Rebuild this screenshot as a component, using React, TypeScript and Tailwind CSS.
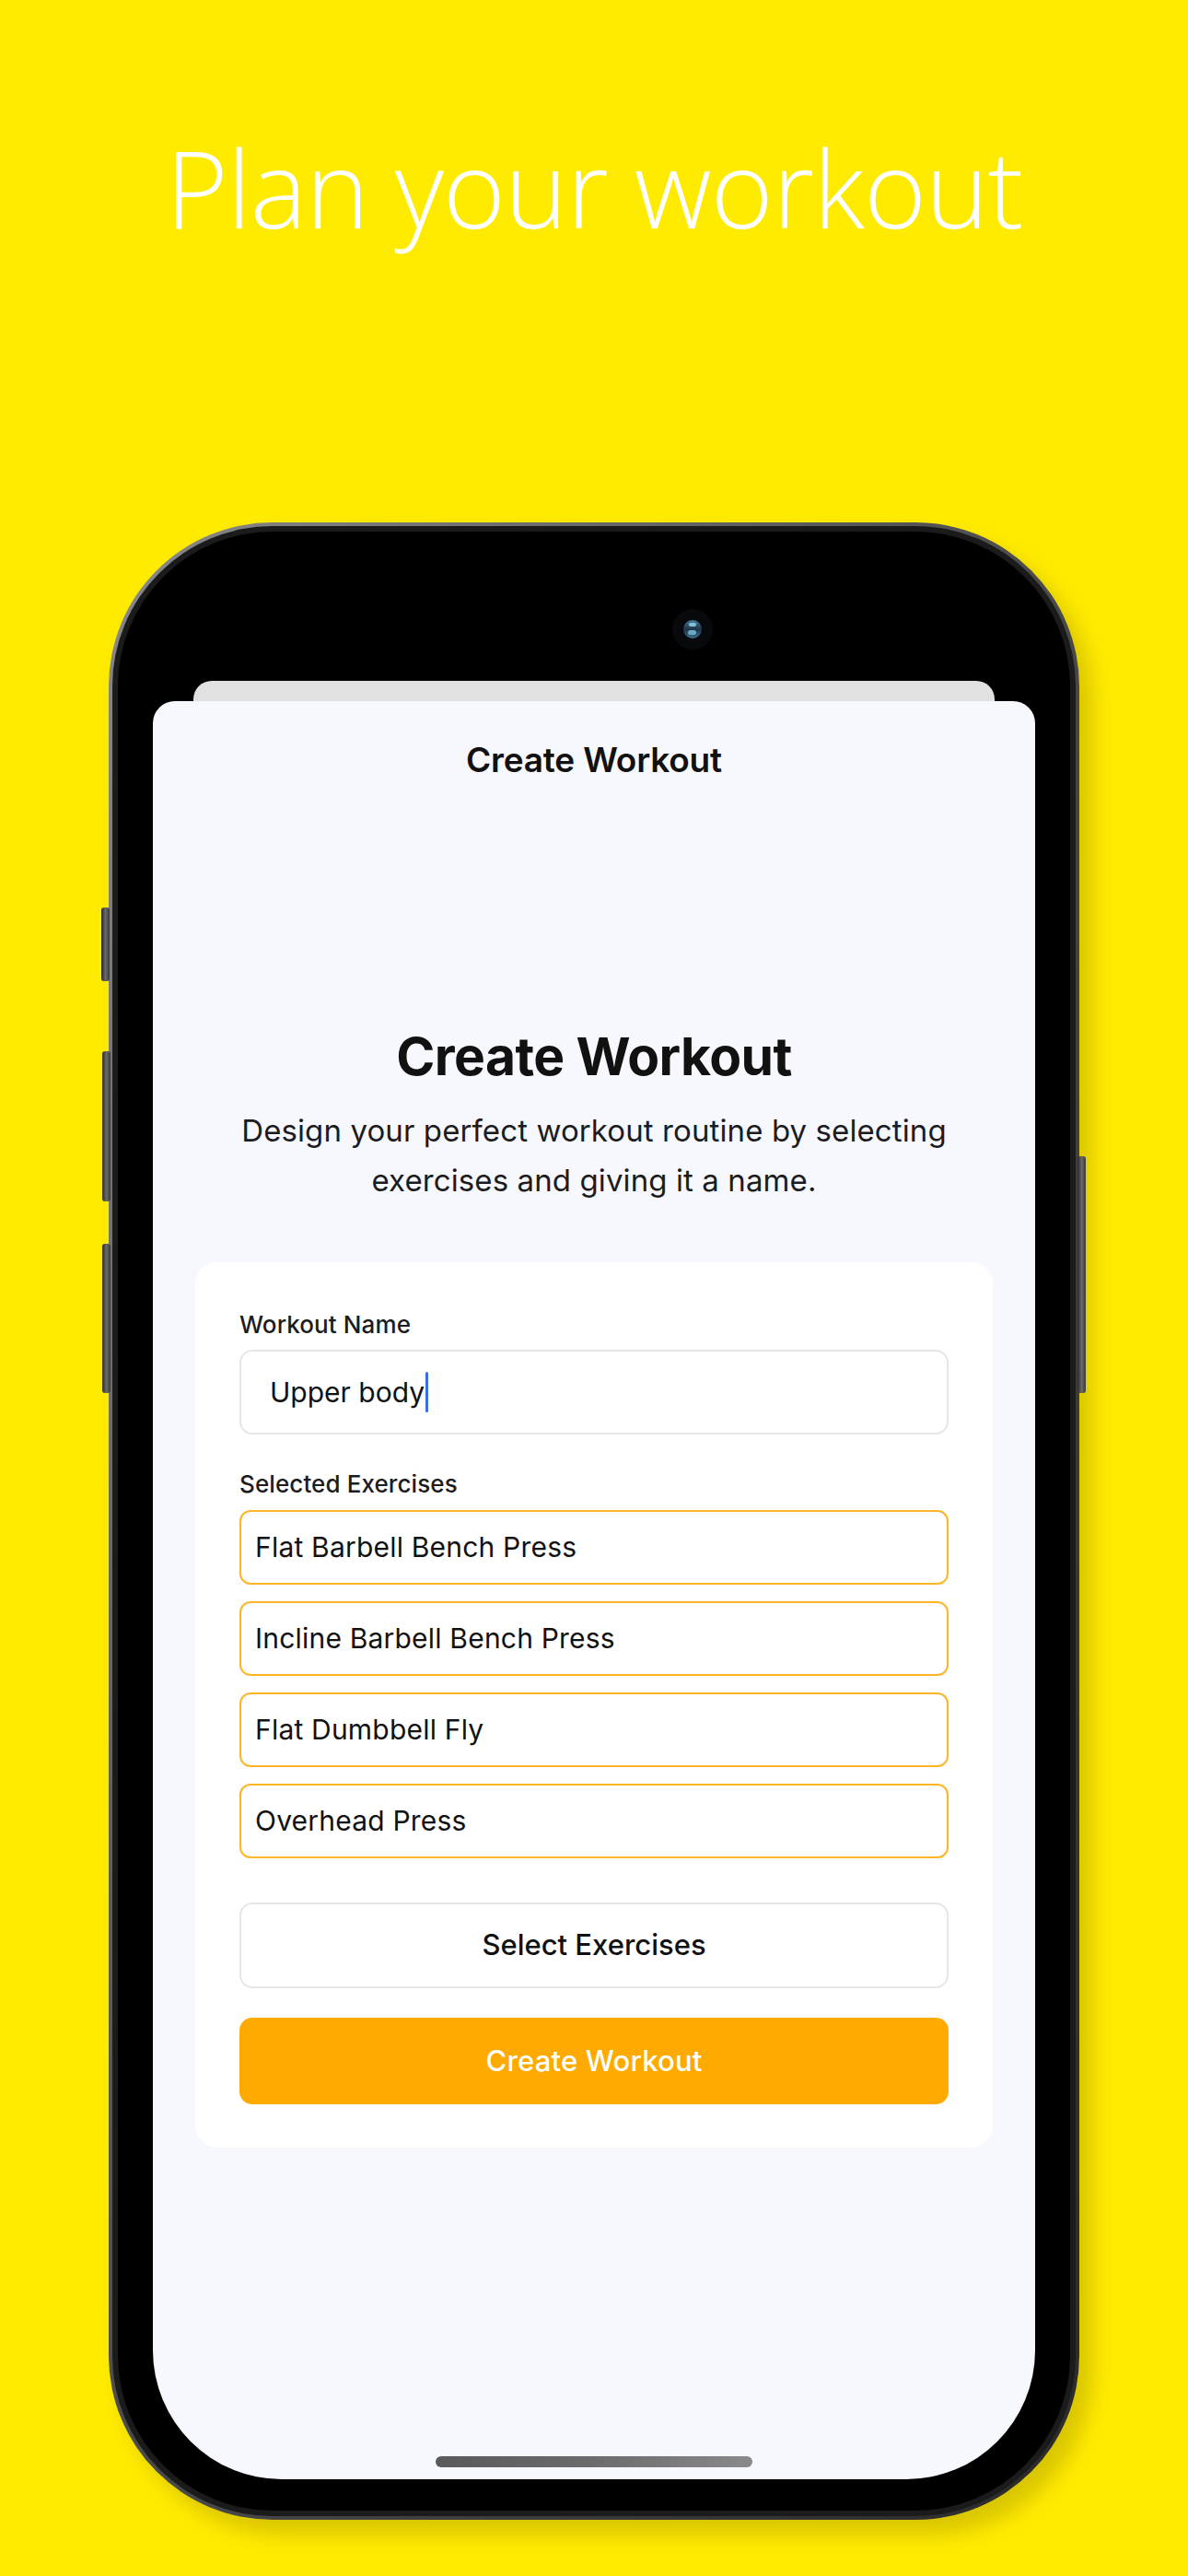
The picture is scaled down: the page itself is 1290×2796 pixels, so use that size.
import React from 'react';

const EXERCISES = [
  'Flat Barbell Bench Press',
  'Incline Barbell Bench Press',
  'Flat Dumbbell Fly',
  'Overhead Press',
];

const ui = { fontFamily: 'Inter, "Liberation Sans", sans-serif' };

function SideButton({ className }: { className: string }) {
  return <div className={`absolute w-[9px] rounded-[3px] bg-gradient-to-r from-[#2a2a2a] via-[#6a6a6a] to-[#3a3a3a] ${className}`} />;
}

function Phone() {
  return (
    <div className="relative mx-auto mt-[296px] w-[1054px] h-[2168px]">
      {/* hardware buttons */}
      <SideButton className="left-[-8px] top-[418px] h-[80px]" />
      <SideButton className="left-[-7px] top-[574px] h-[163px]" />
      <SideButton className="left-[-7px] top-[783px] h-[162px]" />
      <SideButton className="right-[-7px] top-[688px] h-[257px]" />

      <div className="h-full rounded-[178px] bg-gradient-to-br from-[#8a8a8a] via-[#4a4a4a] to-[#2a2a2a] p-[4px] shadow-[14px_16px_22px_rgba(120,100,0,0.28)]">
        <div className="h-full rounded-[174px] bg-[#1b1b1b] p-[6px]">
          <div className="h-full rounded-[168px] bg-black pt-[38px] px-[38px] pb-[34px]">
            <div className="relative h-full overflow-hidden rounded-[140px] bg-black flex flex-col">
              {/* camera */}
              <div className="absolute left-[564px] top-[46px] w-[44px] h-[44px] rounded-full bg-[#07090c] flex items-center justify-center">
                <div className="relative w-[20px] h-[20px] rounded-full bg-gradient-to-b from-[#4d7f9c] via-[#1d3346] to-[#3f7290]">
                  <div className="absolute left-[6px] top-[3px] w-[8px] h-[4px] rounded-full bg-[#7fc4d8]" />
                  <div className="absolute left-[5px] top-[11px] w-[9px] h-[5px] rounded-full bg-[#6aa8c4]" />
                </div>
              </div>

              <div className="h-[124px] shrink-0" />
              <div className="mx-[44px] h-[22px] shrink-0 rounded-t-[20px] bg-[#e1e1e1]" />

              <Sheet />

              <div className="absolute bottom-[13px] left-1/2 -translate-x-1/2 w-[344px] h-[12px] rounded-full bg-gradient-to-r from-[#5a5a5a] via-[#6c6c6c] to-[#8a8a8a]" />
            </div>
          </div>
        </div>
      </div>
    </div>
  );
}

function Sheet() {
  return (
    <div className="flex-1 rounded-t-[24px] bg-[#f7f8fd] flex flex-col" style={ui}>
      <div className="h-[128px] shrink-0 flex items-center justify-center">
        <span className="text-[37px] font-semibold text-[#111] tracking-[-0.2px]">Create Workout</span>
      </div>

      <h1 className="mt-[224px] text-center text-[57px] leading-[68px] font-bold text-[#111] tracking-[-0.6px]">
        Create Workout
      </h1>
      <p className="mt-[19px] text-center text-[33px] leading-[54px] text-[#1c1c1e] tracking-[0.1px]">
        Design your perfect workout routine by selecting
        <br />
        exercises and giving it a name.
      </p>

      <div className="mt-[62px] mx-[46px] rounded-[24px] bg-white px-[48px] pt-[53px] pb-[47px]">
        <label className="block text-[26px] leading-[30px] font-medium text-[#1c1c1e] tracking-[0.1px]">Workout Name</label>
        <div className="mt-[12px] h-[92px] rounded-[14px] border-2 border-[#e6e6e8] bg-white flex items-center pl-[31px]">
          <span className="text-[30px] text-[#111]">Upper body</span>
          <span className="ml-[1px] w-[3px] h-[44px] rounded-full bg-[#3a6ee8]" />
        </div>

        <label className="mt-[39px] block text-[26px] leading-[30px] font-medium text-[#1c1c1e] tracking-[0.1px]">Selected Exercises</label>
        <div className="mt-[13px] flex flex-col gap-[18px]">
          {EXERCISES.map(name => (
            <div
              key={name}
              className="h-[81px] rounded-[12px] border-[2.5px] border-[#ffb526] bg-white flex items-center pl-[15px]"
            >
              <span className="text-[30px] text-[#111] tracking-[0.2px]">{name}</span>
            </div>
          ))}
        </div>

        <button className="mt-[48px] w-full h-[93px] rounded-[14px] border-2 border-[#e6e6e8] bg-white text-[31px] font-medium text-[#111]">
          Select Exercises
        </button>
        <button className="mt-[32px] w-full h-[94px] rounded-[14px] bg-[#ffaa00] text-[31px] font-medium text-white tracking-[0.2px]">
          Create Workout
        </button>
      </div>
    </div>
  );
}

export default function App() {
  return (
    <div className="w-[1290px] h-[2796px] overflow-hidden bg-[#ffeb00]">
      <h1
        className="pt-[135px] text-center text-[116px] leading-[136px] font-light text-white tracking-[-1px]"
        style={{ fontFamily: '"Open Sans", "Noto Sans", sans-serif' }}
      >
        Plan your workout
      </h1>
      <Phone />
    </div>
  );
}
